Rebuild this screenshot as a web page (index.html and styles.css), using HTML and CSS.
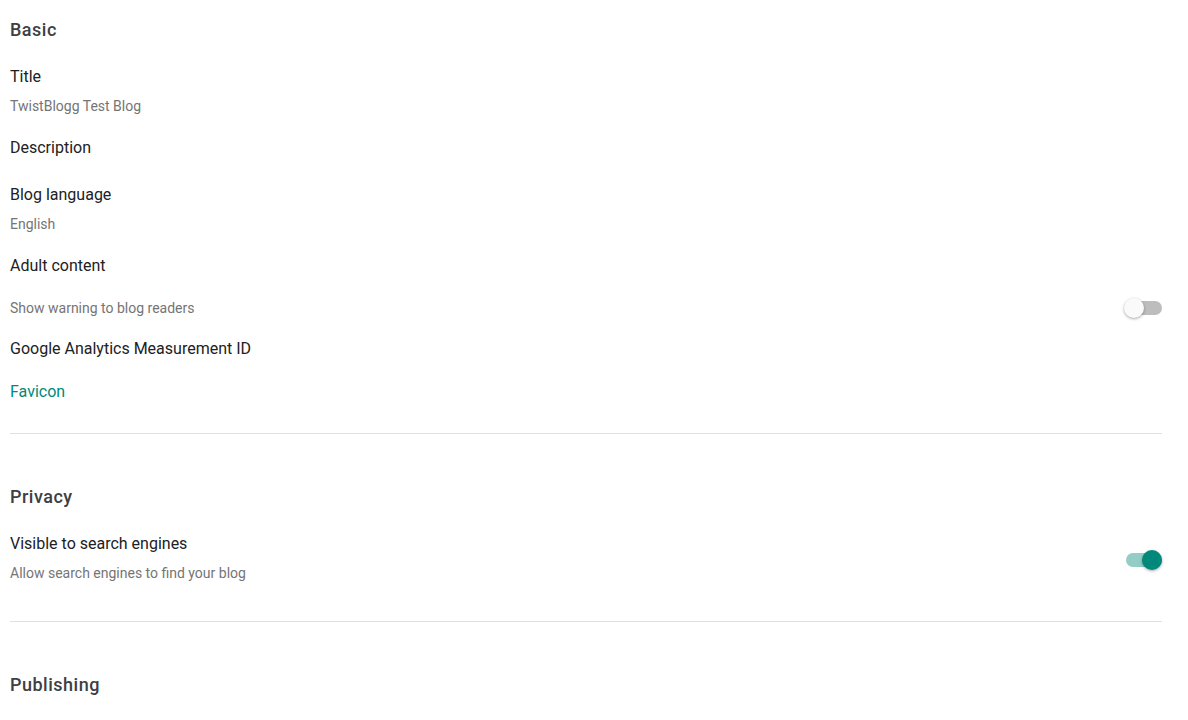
FILE: index.html
```html
<!DOCTYPE html>
<html>
<head>
<meta charset="utf-8">
<link rel="stylesheet" href="styles.css">
</head>
<body>
<div class="page">
  <section class="section section-basic">
    <h2 class="heading">Basic</h2>
    <div class="item item-first">
      <div class="label">Title</div>
      <div class="value">TwistBlogg Test Blog</div>
    </div>
    <div class="item">
      <div class="label">Description</div>
    </div>
    <div class="item item-lang">
      <div class="label">Blog language</div>
      <div class="value">English</div>
    </div>
    <div class="item item-adult">
      <div class="label">Adult content</div>
      <div class="toggle-row">
        <div class="value">Show warning to blog readers</div>
        <div class="switch"><span class="track"></span><span class="knob"></span></div>
      </div>
    </div>
    <div class="item item-ga">
      <div class="label">Google Analytics Measurement ID</div>
    </div>
    <div class="item item-fav">
      <div class="label link">Favicon</div>
    </div>
  </section>
  <section class="section section-privacy">
    <h2 class="heading">Privacy</h2>
    <div class="item item-first switch-item">
      <div class="text">
        <div class="label">Visible to search engines</div>
        <div class="value">Allow search engines to find your blog</div>
      </div>
      <div class="switch on"><span class="track"></span><span class="knob"></span></div>
    </div>
  </section>
  <section class="section last">
    <h2 class="heading">Publishing</h2>
  </section>
</div>
</body>
</html>
```
FILE: styles.css
```css
html, body {
  margin: 0;
  padding: 0;
  background: #ffffff;
}
body {
  font-family: Roboto, "Liberation Sans", Arial, sans-serif;
  color: #202124;
}
.page {
  padding: 0 26px 0 10px;
}
.section {
  border-bottom: 1px solid #e0e0e0;
  padding-top: 18px;
}
.section + .section {
  padding-top: 51px;
}
.section-basic {
  padding-bottom: 31px;
}
.section-privacy {
  padding-bottom: 38px;
}
.section.last {
  border-bottom: none;
}
.heading {
  margin: 0;
  font-size: 18px;
  line-height: 24px;
  font-weight: 500;
  letter-spacing: 0.5px;
  color: #3c4043;
}
.item {
  margin-top: 22px;
}
.item-first {
  margin-top: 25px;
}
.item-lang {
  margin-top: 27px;
}
.item-adult {
  margin-top: 22px;
}
.item-ga {
  margin-top: 21px;
}
.item-fav {
  margin-top: 23px;
}
.label {
  font-size: 16px;
  line-height: 20px;
  color: #202124;
}
.value {
  margin-top: 9px;
  font-size: 14px;
  line-height: 20px;
  color: #757575;
}
.link {
  color: #00897b;
}
.toggle-row {
  margin-top: 22px;
  display: flex;
  align-items: center;
  justify-content: space-between;
  height: 20px;
}
.toggle-row .value {
  margin-top: 0;
}
.switch-item {
  display: flex;
  align-items: center;
  justify-content: space-between;
}
.switch-item .switch {
  margin-top: 2px;
}
.switch {
  position: relative;
  width: 38px;
  height: 20px;
  flex: none;
}
.track {
  position: absolute;
  left: 2px;
  right: 0;
  top: 3px;
  height: 14px;
  border-radius: 7px;
  background: #bdbdbd;
}
.knob {
  position: absolute;
  left: 0;
  top: 0;
  width: 20px;
  height: 20px;
  border-radius: 50%;
  background: #fafafa;
  box-shadow: 0 1px 3px rgba(0, 0, 0, 0.35);
}
.switch.on .track {
  background: #93cdc6;
}
.switch.on .knob {
  left: auto;
  right: 0;
  background: #00897b;
}
```
